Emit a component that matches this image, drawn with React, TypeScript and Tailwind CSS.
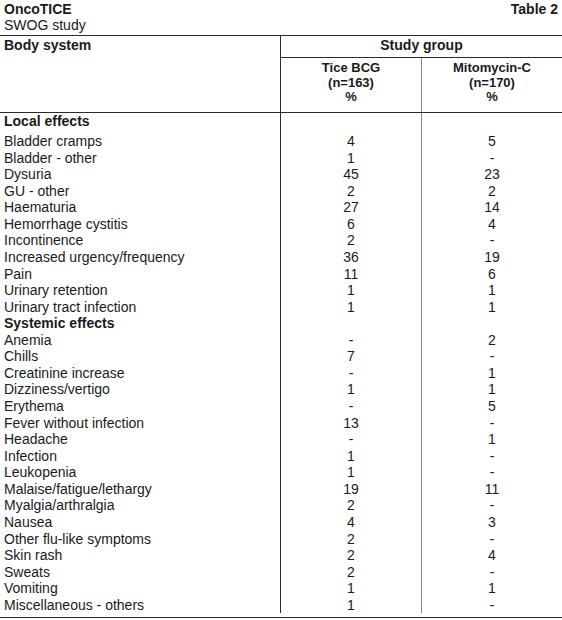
import React from "react";

type Row = { label: string; tice?: string; mito?: string; heading?: boolean };

const rows: Row[] = [
  { label: "Local effects", heading: true },
  { label: "Bladder cramps", tice: "4", mito: "5" },
  { label: "Bladder - other", tice: "1", mito: "-" },
  { label: "Dysuria", tice: "45", mito: "23" },
  { label: "GU - other", tice: "2", mito: "2" },
  { label: "Haematuria", tice: "27", mito: "14" },
  { label: "Hemorrhage cystitis", tice: "6", mito: "4" },
  { label: "Incontinence", tice: "2", mito: "-" },
  { label: "Increased urgency/frequency", tice: "36", mito: "19" },
  { label: "Pain", tice: "11", mito: "6" },
  { label: "Urinary retention", tice: "1", mito: "1" },
  { label: "Urinary tract infection", tice: "1", mito: "1" },
  { label: "Systemic effects", heading: true },
  { label: "Anemia", tice: "-", mito: "2" },
  { label: "Chills", tice: "7", mito: "-" },
  { label: "Creatinine increase", tice: "-", mito: "1" },
  { label: "Dizziness/vertigo", tice: "1", mito: "1" },
  { label: "Erythema", tice: "-", mito: "5" },
  { label: "Fever without infection", tice: "13", mito: "-" },
  { label: "Headache", tice: "-", mito: "1" },
  { label: "Infection", tice: "1", mito: "-" },
  { label: "Leukopenia", tice: "1", mito: "-" },
  { label: "Malaise/fatigue/lethargy", tice: "19", mito: "11" },
  { label: "Myalgia/arthralgia", tice: "2", mito: "-" },
  { label: "Nausea", tice: "4", mito: "3" },
  { label: "Other flu-like symptoms", tice: "2", mito: "-" },
  { label: "Skin rash", tice: "2", mito: "4" },
  { label: "Sweats", tice: "2", mito: "-" },
  { label: "Vomiting", tice: "1", mito: "1" },
  { label: "Miscellaneous - others", tice: "1", mito: "-" },
];

const App = () => {
  return (
    <div className="w-[562px] h-[620px] bg-white text-[14px] text-[#1a1a1a] font-['Liberation_Sans',Arial,sans-serif] overflow-hidden">
      {/* title */}
      <div className="flex justify-between px-[4px] pt-[1px] leading-[16px]">
        <div>
          <div className="font-bold">OncoTICE</div>
          <div>SWOG study</div>
        </div>
        <div className="font-bold">Table 2</div>
      </div>

      <div className="mt-[2px] border-t border-b border-[#2b2b2b]">
        {/* header */}
        <div className="flex border-b border-[#2b2b2b]">
          <div className="w-[281px] border-r border-[#2b2b2b] pl-[4px] pt-[1px] leading-[16px] font-bold">
            Body system
          </div>
          <div className="flex-1 flex flex-col font-bold">
            <div className="h-[22px] border-b border-[#2b2b2b] pt-[1px] leading-[16px] text-center">
              Study group
            </div>
            <div className="flex h-[54px] text-[13px] leading-[14.5px] text-center">
              <div className="w-[141px] border-r border-[#8a8a8a] pt-[3px]">
                <div>Tice BCG</div>
                <div>(n=163)</div>
                <div>%</div>
              </div>
              <div className="flex-1 pt-[3px]">
                <div>Mitomycin-C</div>
                <div>(n=170)</div>
                <div>%</div>
              </div>
            </div>
          </div>
        </div>

        {/* body */}
        <div className="pb-[4px]">
          {rows.map((r, i) => (
            <div key={r.label} className={`flex leading-[16.57px] ${i === 0 ? "h-[20px]" : "h-[16.57px]"}`}>
              <div className={`w-[281px] border-r border-[#2b2b2b] pl-[4px] ${r.heading ? "font-bold" : ""}`}>
                {r.label}
              </div>
              <div className="w-[141px] border-r border-[#8a8a8a] text-center">{r.tice}</div>
              <div className="flex-1 text-center">{r.mito}</div>
            </div>
          ))}
        </div>
      </div>
    </div>
  );
};

export default App;
